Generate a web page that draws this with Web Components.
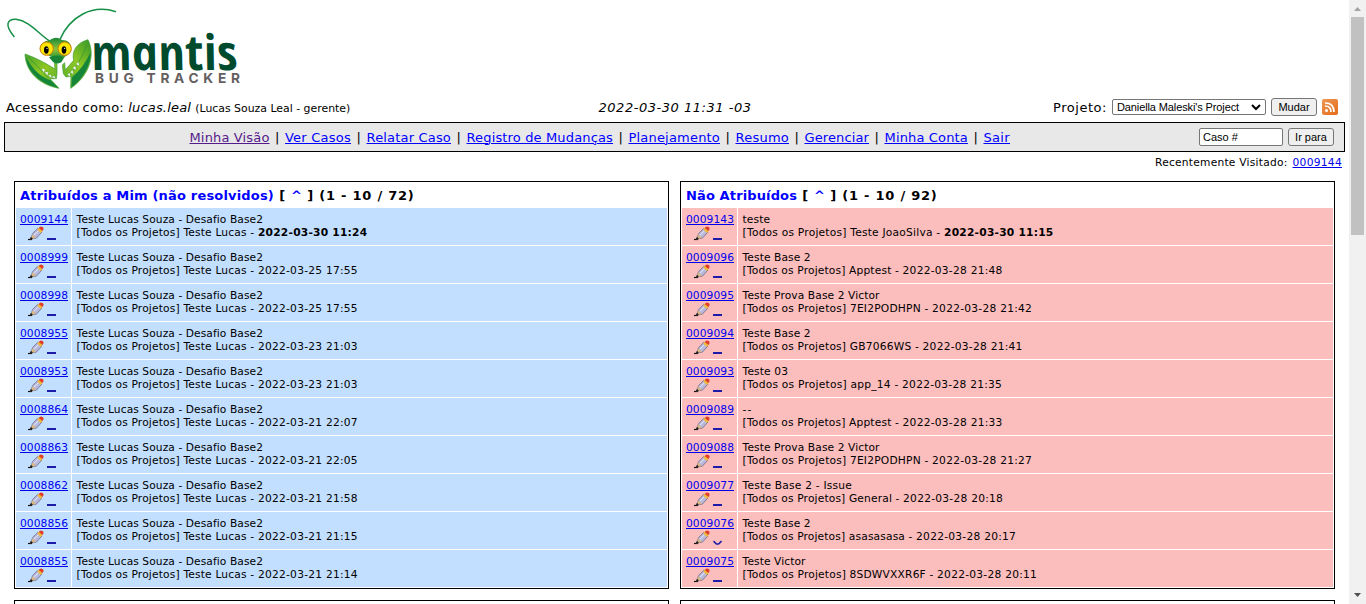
<!DOCTYPE html>
<html lang="pt-BR"><head><meta charset="utf-8"><title>Mantis - Minha Visão</title>
<style>
html,body{margin:0;height:604px;overflow:hidden;background:#fff;color:#000}
body{font-family:Verdana,"DejaVu Sans",sans-serif;font-size:13px}
</style></head><body><my-view></my-view>
<script>
const define=(name,html,setup)=>customElements.define(name,class extends HTMLElement{
 connectedCallback(){ if(this.shadowRoot)return; const r=this.attachShadow({mode:'open'});
  r.innerHTML=typeof html==='function'?html(this):html; if(setup)setup(this,r);}
});
/* Text run that spreads its letters over a given width */
define('fit-text','<style>:host{display:inline-block;white-space:pre}span{text-decoration:var(--deco,none);text-decoration-thickness:1px}</style><span><slot></slot></span>',(el,r)=>{
 const w=+el.getAttribute('w'),s=r.querySelector('span');
 const fit=()=>{s.style.letterSpacing='0';const n=el.textContent.length;if(w&&n)s.style.letterSpacing=((w-s.getBoundingClientRect().width)/n)+'px';};
 requestAnimationFrame(fit);
});
define('mantis-logo',`<style>:host{display:block;height:95px}svg{display:block;overflow:visible}</style>
<svg width="250" height="95" viewBox="0 0 250 95">
<defs><linearGradient id="a" x1="0" y1="0" x2="1" y2="1"><stop offset="0" stop-color="#4aa52c"/><stop offset=".5" stop-color="#8fc722"/><stop offset="1" stop-color="#4fac2c"/></linearGradient>
<linearGradient id="b" x1=".9" y1="0" x2=".2" y2="1"><stop offset="0" stop-color="#3b9c2a"/><stop offset=".5" stop-color="#8fc722"/><stop offset="1" stop-color="#5ab02a"/></linearGradient>
<linearGradient id="c" x1="0" y1="0" x2="0" y2="1"><stop offset="0" stop-color="#178536"/><stop offset=".45" stop-color="#8cc63c"/><stop offset=".75" stop-color="#3c9b32"/><stop offset="1" stop-color="#178536"/></linearGradient></defs>
<g transform="scale(.33333)">
<path d="M43 111C12 74 22 57 48 58C92 63 118 106 154 126" fill="none" stroke="#169047" stroke-width="4.5"/>
<path d="M180 120C211 51 276 14 348 37" transform="translate(0 -2)" fill="none" stroke="#169047" stroke-width="4.5"/>
<path d="M75 162Q116 176 165 207L163 188L171 191V220L169 236L150 236L177 265C118 254 77 216 75 162Z" fill="url(#a)" stroke="#3a9c33" stroke-width="2"/>
<path d="M78 172C82 218 122 252 175 264L152 241Q108 228 78 172Z" fill="#15853a"/>
<path d="M84 170L121 208L145 234" fill="none" stroke="#2c9433" stroke-width="2"/>
<path d="M264 119C288 167 266 229 212 265L213 229L198 231L190 221L187 195L194 188L196 210L221 181C214 151 232 128 264 119Z" fill="url(#b)" stroke="#3a9c33" stroke-width="2"/>
<path d="M272 156C273 194 250 238 214 262L216 232Q251 203 272 156Z" fill="#15853a"/>
<path d="M260 135Q245 178 217 213" fill="none" stroke="#2c9433" stroke-width="2"/>
<path d="M124 206l11 1-3 11zm10 10 11 0-3 11zm10 10 9-2 2 11zm10 5 9-4 4 9zM235 185l-7 8 10 5zm-9 12-8 8 10 5zm-8 12-7 8 9 6zm-8 10-8 3 8 10z" fill="#fff" stroke="#5d9a58"/>
<path d="M148 121Q167 106 186 120Q213 120 213 144Q212 160 194 171L184 187Q168 196 156 171Q122 157 120 143Q126 124 148 121Z" fill="url(#c)"/>
<path d="M147 172Q169 162 189 171L181 187Q168 196 157 184Z" fill="#178536"/>
<ellipse cx="140" cy="146" rx="20" ry="20" fill="#ffe600" stroke="#c8790a" stroke-width="3"/><ellipse cx="194" cy="146" rx="20" ry="20" fill="#ffe600" stroke="#c8790a" stroke-width="3"/>
<ellipse cx="139" cy="150" rx="7" ry="11"/><ellipse cx="192" cy="150" rx="7" ry="11"/><circle cx="141" cy="145" r="2" fill="#fff"/><circle cx="194" cy="145" r="2" fill="#fff"/></g>
<text transform="translate(94 69.5) skewX(12)" textLength="147" lengthAdjust="spacingAndGlyphs" font-family="Open Sans" font-style="italic" font-weight="700" font-size="49" fill="#004b2d">mantis</text>
<text x="95" y="82.5" textLength="145" font-family="Inter" font-weight="700" font-size="13.7" fill="#65605f">BUG TRACKER</text></svg>`);
define('feed-icon',`<style>:host{display:block;width:16px;height:16px}svg{display:block}</style><svg width="16" height="16"><defs><linearGradient id="g" x2="1" y2="1"><stop stop-color="#ee9653"/><stop offset="1" stop-color="#e46d1b"/></linearGradient></defs><rect width="16" height="16" rx="2" fill="url(#g)"/><circle cx="4.5" cy="11.5" r="1.5" fill="#fff"/><path d="M3 7Q9 7 9 13M3 4Q12 4 12 13" fill="none" stroke="#fff" stroke-width="1.7"/></svg>`);
define('pencil-icon',`<style>:host{display:block;width:16px;height:16px}svg{display:block}</style><svg width="16" height="16" viewBox="0 0 16 16"><path d="M0 13.5H4" stroke="#111" stroke-width="1.2"/><path d="M2.6 13 4.6 7.6 9.7 2.4 14 6 8.3 12.2Z" fill="#b9b9dc" stroke="#5c5c80" stroke-width=".7"/><path d="M2.2 13.3 4.5 8.3 8 12Z" fill="#d6b681"/><path d="M1.3 13.9 3 10.8 5 12.9Z" fill="#222"/><path d="M6 9.2 10.5 4.7" stroke="#e9e9fa" stroke-width="1"/><path d="M9.2 3.5 11.2 1.6 14.8 4.8 12.9 7Z" fill="#f0b93a"/><path d="M10.8 2Q12-.3 14.6.9Q16.6 2.6 14.4 5Z" fill="#e03c2a"/></svg>`);
define('scroll-bar',`<style>:host{display:flex;flex-direction:column;align-items:center;width:17px;background:#f1f1f1}svg{display:block;flex:none}div{width:13px;height:218px;background:#c1c1c1}span{flex:1}</style><svg width="17" height="17"><path d="M5 11 8.5 7 12 11Z" fill="#a3a3a3"/></svg><div></div><span></span><svg width="17" height="17"><path d="M5 6H12L8.5 10Z" fill="#505050"/></svg>`);
define('login-info',`<style>:host{display:grid;grid-template-columns:1fr auto 1fr;align-items:center;height:24px;padding:0 7px 0 2px}
small{font-size:10.9px}.d{padding-left:6px}.r{display:flex;justify-content:flex-end;align-items:center}.sel{display:flex;align-items:center;justify-content:space-between;box-sizing:border-box;width:154px;height:16px;border:1px solid #767676;border-radius:2px;padding:0 4px;margin:0 5px;font:11px "Liberation Sans",sans-serif}.b{box-sizing:border-box;width:46px;height:18px;border:1px solid #767676;border-radius:3px;background:#efefef;text-align:center;font:11px/16px "Liberation Sans",sans-serif;margin-right:5px}</style>
<div><fit-text w="118">Acessando como:</fit-text> <i><fit-text w="63">lucas.leal</fit-text></i> <small><fit-text w="155">(Lucas Souza Leal - gerente)</fit-text></small></div><i class="d"><fit-text w="153">2022-03-30 11:31 -03</fit-text></i>
<div class="r"><fit-text w="54">Projeto:</fit-text><div class="sel"><fit-text w="122">Daniella Maleski's Project</fit-text><svg width="10" height="7"><path d="M1 1 5 5 9 1" fill="none" stroke="#000" stroke-width="2"/></svg></div><div class="b">Mudar</div><feed-icon></feed-icon></div>`);
define('main-menu',()=>{const m=[['Minha Visão',80],['Ver Casos',66],['Relatar Caso',84.5],['Registro de Mudanças',146.5],['Planejamento',91.5],['Resumo',53.5],['Gerenciar',64.5],['Minha Conta',83.5],['Sair',26.5]];
return `<style>:host{display:flex;align-items:center;box-sizing:border-box;height:30px;border:1px solid #000;background:#e8e8e8;padding:0 10px 0 0}nav{flex:1;display:flex;padding-left:184.5px}a{color:#00f;--deco:underline}a:first-child{color:#551a8b}s{text-decoration:none;width:15.5px;text-align:center}.i,.b{box-sizing:border-box;height:18px;border:1px solid #767676;border-radius:2px;font:11px/16px "Liberation Sans",sans-serif}.i{width:84px;background:#fff;padding-left:3px;margin-right:5px}.b{width:46px;background:#efefef;text-align:center;border-radius:3px}</style><nav>${m.map(x=>`<a><fit-text w="${x[1]}">${x[0]}</fit-text></a>`).join('<s>|</s>')}</nav><div class="i">Caso #</div><div class="b">Ir para</div>`});
define('recent-visits',`<style>:host{display:flex;justify-content:flex-end;height:29px;padding:4px 3px 0 0;box-sizing:border-box;font-size:10.667px;line-height:13px}a{color:#00e;--deco:underline;margin-left:5px}</style><fit-text w="132.5">Recentemente Visitado:</fit-text><a><fit-text w="49.5">0009144</fit-text></a>`);
define('issue-row',el=>{const g=k=>el.getAttribute(k)||'';const d=g('date');
return `<style>:host{display:grid;grid-template-columns:55px 1fr;column-gap:1px;height:37px;font-size:10.667px;line-height:13px}div{background:var(--tone);padding-top:5px}.n{padding-left:4px}a{color:#00e;--deco:underline;display:block}.ic{display:flex;background:none;padding:0 0 0 8px}.ic svg{margin:0 0 0 3px}.t{padding-left:4.6px}</style>
<div class="n"><a><fit-text w="48">${g('num')}</fit-text></a><div class="ic"><pencil-icon></pencil-icon><svg width="10" height="16">${g('low')?'<path d="M.5 11.2 3.4 14H5.6L8.5 11.2" fill="none" stroke="#1c1ca8" stroke-width="1.6"/>':'<path d="M0 12H9V14H0Z" fill="#1c1ca8"/>'}</svg></div></div>
<div class="t"><fit-text w="${g('w1')}">${g('subject')}</fit-text><br><fit-text w="${g('w2')}">[Todos os Projetos] ${g('cat')} - </fit-text>${g('bold')?`<b><fit-text w="109.5">${d}</fit-text></b>`:`<fit-text w="100">${d}</fit-text>`}</div>`});
define('issue-panel',`<style>:host{display:block;box-sizing:border-box;border:1px solid #000;padding:1px;height:408px;overflow:hidden}h2{margin:0;height:25px;font-size:13px;line-height:26px;padding-left:4px;white-space:pre}.rows{display:grid;row-gap:1px}</style><h2><slot name="title"></slot></h2><div class="rows"><slot></slot></div>`);
define('my-view',()=>{
const A=[['0009144','2022-03-30 11:24'],['0008999','2022-03-25 17:55'],['0008998','2022-03-25 17:55'],['0008955','2022-03-23 21:03'],['0008953','2022-03-23 21:03'],['0008864','2022-03-21 22:07'],['0008863','2022-03-21 22:05'],['0008862','2022-03-21 21:58'],['0008856','2022-03-21 21:15'],['0008855','2022-03-21 21:14']].map(x=>[x[0],'Teste Lucas Souza - Desafio Base2',186.5,'Teste Lucas',181.3,x[1]]);
const B=[['0009143','teste',27.5,'Teste JoaoSilva',201.4,'2022-03-30 11:15'],['0009096','Teste Base 2',68,'Apptest',160,'2022-03-28 21:48'],['0009095','Teste Prova Base 2 Victor',137,'7EI2PODHPN',189.5,'2022-03-28 21:42'],['0009094','Teste Base 2',68,'GB7066WS',180,'2022-03-28 21:41'],['0009093','Teste 03',45.5,'app_14',159.5,'2022-03-28 21:35'],['0009089','--',10,'Apptest',160,'2022-03-28 21:33'],['0009088','Teste Prova Base 2 Victor',137,'7EI2PODHPN',189.5,'2022-03-28 21:27'],['0009077','Teste Base 2 - Issue',109.5,'General',160.5,'2022-03-28 20:18'],['0009076','Teste Base 2',68,'asasasasa',173.5,'2022-03-28 20:17',1],['0009075','Teste Victor',63,'8SDWVXXR6F',194.5,'2022-03-28 20:11']];
const rows=L=>L.map((x,i)=>`<issue-row num="${x[0]}" subject="${x[1]}" w1="${x[2]}" cat="${x[3]}" w2="${x[4]}" date="${x[5]}" ${x[6]?'low="1"':''} ${i?'':'bold="1"'}></issue-row>`).join('');
const title=(t,w,r,w2)=>`<span slot="title"><a><fit-text w="${w}">${t}</fit-text></a><fit-text w="17"> [ </fit-text><a><fit-text w="11">^</fit-text></a><fit-text w="${w2}"> ] ${r}</fit-text></span>`;
return `<style>:host{display:flex;height:604px}main{flex:1;padding:0 4px;height:604px;overflow:hidden;box-sizing:border-box}mantis-logo{margin-left:-4px}.top{height:3px}.g{display:grid;grid-template-columns:655px 655px;gap:11px 11px;padding:0 10px}.g a{color:#00f}</style>
<main><mantis-logo></mantis-logo><login-info></login-info><div class="top"></div><main-menu></main-menu><recent-visits></recent-visits>
<div class="g"><issue-panel style="--tone:#c2dfff">${title('Atribuídos a Mim (não resolvidos)',254,'(1 - 10 / 72)',112.5)}${rows(A)}</issue-panel><issue-panel style="--tone:#fcbdbd">${title('Não Atribuídos',111,'(1 - 10 / 92)',112.5)}${rows(B)}</issue-panel><issue-panel></issue-panel><issue-panel></issue-panel></div></main><scroll-bar></scroll-bar>`});
</script></body></html>
